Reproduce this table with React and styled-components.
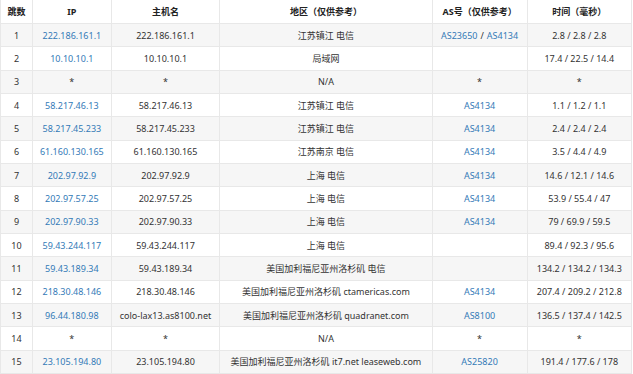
import React from "react";
import styled, { createGlobalStyle } from "styled-components";

const Global = createGlobalStyle`
  html, body { margin: 0; padding: 0; background: #fff; }
  body { font-family: "Noto Sans", "Noto Sans CJK SC", sans-serif; }
`;

const Table = styled.div`
  display: grid;
  grid-template-columns: 32px 78.7px 108.6px 212.3px 95px 104.4px;
  grid-template-rows: 24px repeat(15, 23.33px);
  width: 631px;
  border-left: 1px solid #e8e8e8;
  box-sizing: border-box;
  font-size: 9px;
  color: #333;
`;

const Cell = styled.div`
  display: flex;
  align-items: center;
  justify-content: center;
  text-align: center;
  white-space: nowrap;
  border-right: 1px solid #e8e8e8;
  border-bottom: 1px solid #e8e8e8;
  background: ${(p) => (p.$stripe ? "#f6f6f6" : "#fff")};
  font-weight: ${(p) => (p.$head ? 700 : 400)};
  color: ${(p) => (p.$head ? "#222" : "#333")};
`;

const Link = styled.span`
  color: #337ab7;
`;

const Sep = styled.span`
  margin: 0 3px;
`;

const headers = ["跳数", "IP", "主机名", "地区（仅供参考）", "AS号（仅供参考）", "时间（毫秒）"];

const rows = [
  ["1", "222.186.161.1", "222.186.161.1", "江苏镇江 电信", ["AS23650", "AS4134"], "2.8 / 2.8 / 2.8"],
  ["2", "10.10.10.1", "10.10.10.1", "局域网", [], "17.4 / 22.5 / 14.4"],
  ["3", "*", "*", "N/A", "*", "*"],
  ["4", "58.217.46.13", "58.217.46.13", "江苏镇江 电信", ["AS4134"], "1.1 / 1.2 / 1.1"],
  ["5", "58.217.45.233", "58.217.45.233", "江苏镇江 电信", ["AS4134"], "2.4 / 2.4 / 2.4"],
  ["6", "61.160.130.165", "61.160.130.165", "江苏南京 电信", ["AS4134"], "3.5 / 4.4 / 4.9"],
  ["7", "202.97.92.9", "202.97.92.9", "上海 电信", ["AS4134"], "14.6 / 12.1 / 14.6"],
  ["8", "202.97.57.25", "202.97.57.25", "上海 电信", ["AS4134"], "53.9 / 55.4 / 47"],
  ["9", "202.97.90.33", "202.97.90.33", "上海 电信", ["AS4134"], "79 / 69.9 / 59.5"],
  ["10", "59.43.244.117", "59.43.244.117", "上海 电信", [], "89.4 / 92.3 / 95.6"],
  ["11", "59.43.189.34", "59.43.189.34", "美国加利福尼亚州洛杉矶 电信", [], "134.2 / 134.2 / 134.3"],
  ["12", "218.30.48.146", "218.30.48.146", "美国加利福尼亚州洛杉矶 ctamericas.com", ["AS4134"], "207.4 / 209.2 / 212.8"],
  ["13", "96.44.180.98", "colo-lax13.as8100.net", "美国加利福尼亚州洛杉矶 quadranet.com", ["AS8100"], "136.5 / 137.4 / 142.5"],
  ["14", "*", "*", "N/A", "*", "*"],
  ["15", "23.105.194.80", "23.105.194.80", "美国加利福尼亚州洛杉矶 it7.net leaseweb.com", ["AS25820"], "191.4 / 177.6 / 178"],
];

function AsCell({ value }) {
  if (typeof value === "string") return value;
  return value.map((a, i) => (
    <React.Fragment key={a}>
      {i > 0 && <Sep>/</Sep>}
      <Link>{a}</Link>
    </React.Fragment>
  ));
}

export default function App() {
  return (
    <>
      <Global />
      <Table>
        {headers.map((h) => (
          <Cell key={h} $head>
            {h}
          </Cell>
        ))}
        {rows.map((r, i) => {
          const stripe = i % 2 === 0;
          return (
            <React.Fragment key={r[0]}>
              <Cell $stripe={stripe}>{r[0]}</Cell>
              <Cell $stripe={stripe}>{r[1] === "*" ? "*" : <Link>{r[1]}</Link>}</Cell>
              <Cell $stripe={stripe}>{r[2]}</Cell>
              <Cell $stripe={stripe}>{r[3]}</Cell>
              <Cell $stripe={stripe}>
                <AsCell value={r[4]} />
              </Cell>
              <Cell $stripe={stripe}>{r[5]}</Cell>
            </React.Fragment>
          );
        })}
      </Table>
    </>
  );
}
